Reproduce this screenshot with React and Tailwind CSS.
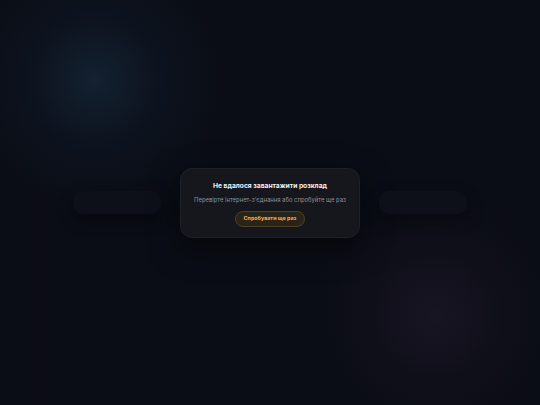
export default function App() {
  return (
    <div
      className="relative w-[540px] h-[405px] overflow-hidden bg-[#0a0d15]"
      style={{ fontFamily: "Inter, 'Noto Sans', sans-serif" }}
    >
      {/* faint stripes */}
      <div className="absolute inset-0 flex justify-between px-[16px] pointer-events-none">
        <div className="flex gap-[20px]">
          <div className="w-[2px] h-full bg-[rgba(20,10,25,0.25)]" />
          <div className="w-[3px] h-full bg-[rgba(20,10,25,0.2)]" />
          <div className="w-[2px] h-full bg-[rgba(20,10,25,0.2)]" />
        </div>
        <div className="flex gap-[24px]">
          <div className="w-[2px] h-full bg-[rgba(20,10,25,0.2)]" />
          <div className="w-[3px] h-full bg-[rgba(20,10,25,0.2)]" />
          <div className="w-[2px] h-full bg-[rgba(20,10,25,0.2)]" />
        </div>
      </div>
      {/* glows */}
      <div className="absolute left-[-35px] top-[-50px] w-[260px] h-[260px] rounded-full bg-[radial-gradient(circle,rgba(28,52,75,0.5)_0%,rgba(20,35,55,0.28)_35%,rgba(10,13,21,0)_70%)]" />
      <div className="absolute left-[310px] top-[190px] w-[250px] h-[250px] rounded-full bg-[radial-gradient(circle,rgba(42,30,52,0.45)_0%,rgba(30,22,40,0.22)_40%,rgba(10,13,21,0)_70%)]" />

      <div className="relative h-full flex items-center justify-center gap-[19px]">
        <div className="w-[88px] h-[23px] rounded-[10px] bg-[#0d1018] shadow-[0_6px_16px_rgba(0,0,0,0.35)]" />
        <div className="w-[180px] h-[70px] rounded-[12px] bg-[#15171d] border border-[#1d2027] shadow-[0_10px_30px_rgba(0,0,0,0.5)] flex flex-col items-center pt-[13px]">
          <div className="text-[6.7px] leading-[9px] font-bold text-[#f2f2f4]">
            Не вдалося завантажити розклад
          </div>
          <div className="mt-[5px] text-[5.9px] leading-[8px] text-[#8e929b]">
            Перевірте інтернет-з'єднання або спробуйте ще раз
          </div>
          <div className="mt-[7px] h-[16px] px-[8px] rounded-full bg-[#2a2418] border border-[#4e3f24] flex items-center text-[5.4px] font-bold text-[#e5b45a]">
            Спробувати ще раз
          </div>
        </div>
        <div className="w-[88px] h-[23px] rounded-[10px] bg-[#0d1018] shadow-[0_6px_16px_rgba(0,0,0,0.35)]" />
      </div>
    </div>
  );
}
